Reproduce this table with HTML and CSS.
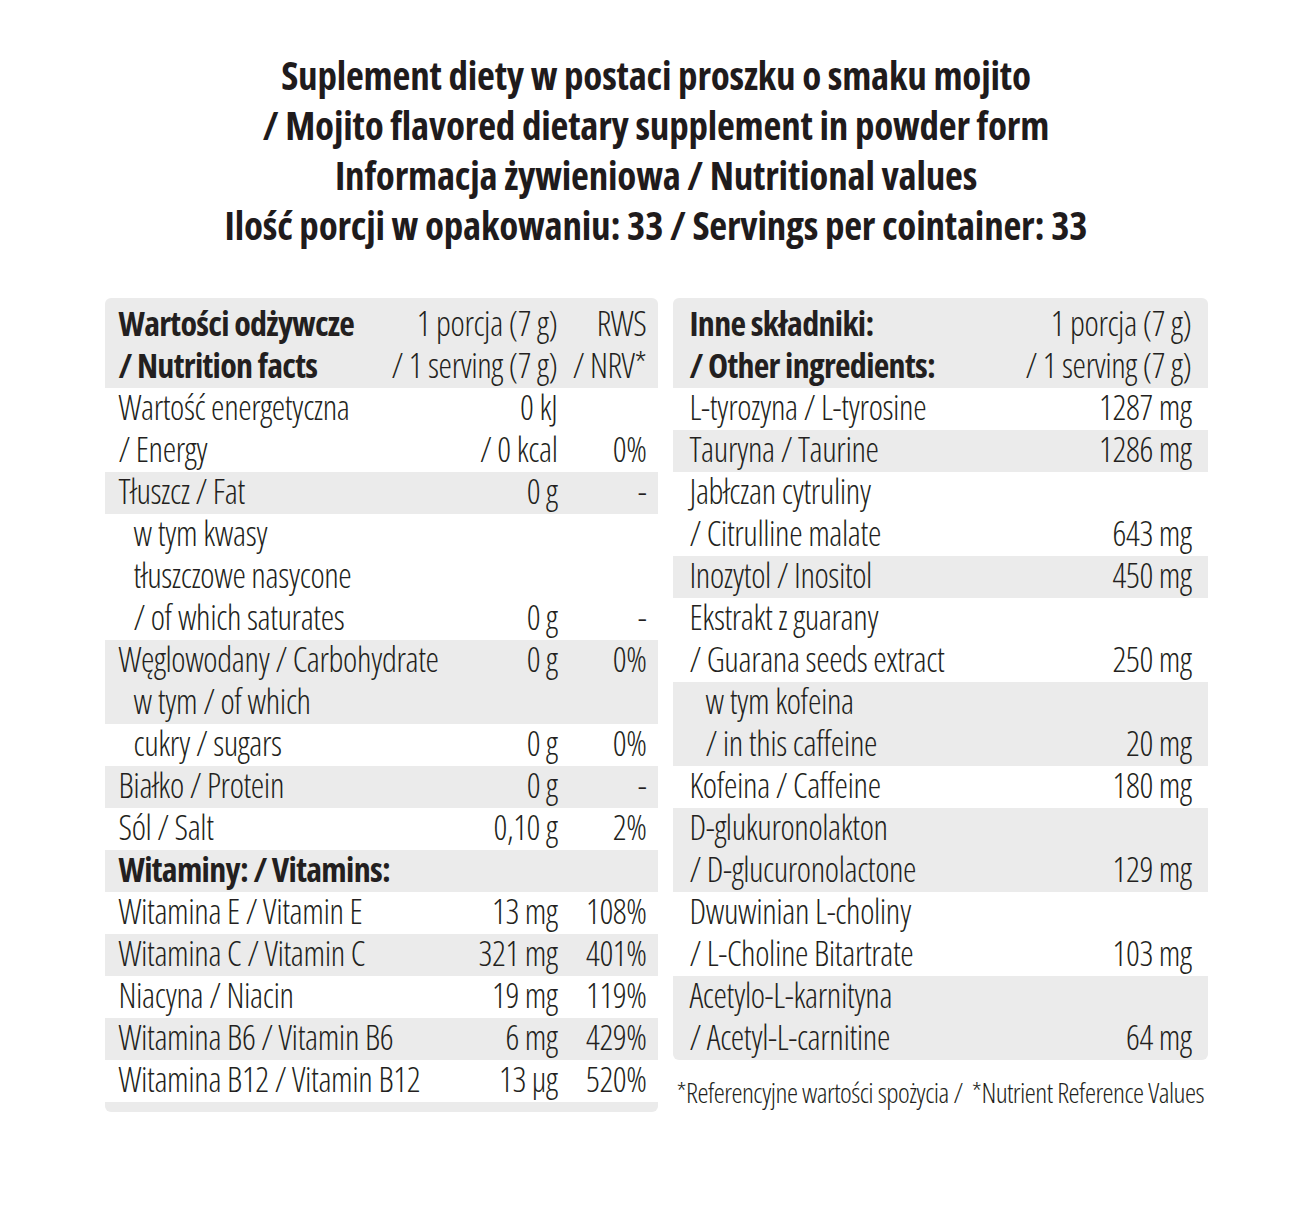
FILE: index.html
```
<!DOCTYPE html>
<html lang="pl">
<head>
<meta charset="utf-8">
<title>Informacja żywieniowa</title>
<link rel="stylesheet" href="styles.css">
</head>
<body>
<div class="page">
  <h1 class="title">
    <span>Suplement diety w postaci proszku o smaku mojito</span>
    <span>/ Mojito flavored dietary supplement in powder form</span>
    <span>Informacja żywieniowa / Nutritional values</span>
    <span>Ilość porcji w opakowaniu: 33 / Servings per cointainer: 33</span>
  </h1>

  <div class="tables">
    <div class="tbl left">
      <div class="grp shade head">
        <div class="ln"><span class="b">Wartości odżywcze</span><span class="v">1 porcja (7 g)</span><span class="v">RWS</span></div>
        <div class="ln"><span class="b">/ Nutrition facts</span><span class="v">/ 1 serving (7 g)</span><span class="v">/ NRV*</span></div>
      </div>
      <div class="grp">
        <div class="ln"><span>Wartość energetyczna</span><span class="v">0 kJ</span><span class="v"></span></div>
        <div class="ln"><span>/ Energy</span><span class="v">/ 0 kcal</span><span class="v">0%</span></div>
      </div>
      <div class="grp shade">
        <div class="ln"><span>Tłuszcz / Fat</span><span class="v">0 g</span><span class="v">-</span></div>
      </div>
      <div class="grp">
        <div class="ln"><span class="in">w tym kwasy</span><span class="v"></span><span class="v"></span></div>
        <div class="ln"><span class="in">tłuszczowe nasycone</span><span class="v"></span><span class="v"></span></div>
        <div class="ln"><span class="in">/ of which saturates</span><span class="v">0 g</span><span class="v">-</span></div>
      </div>
      <div class="grp shade">
        <div class="ln"><span>Węglowodany / Carbohydrate</span><span class="v">0 g</span><span class="v">0%</span></div>
        <div class="ln"><span class="in">w tym / of which</span><span class="v"></span><span class="v"></span></div>
      </div>
      <div class="grp">
        <div class="ln"><span class="in">cukry / sugars</span><span class="v">0 g</span><span class="v">0%</span></div>
      </div>
      <div class="grp shade">
        <div class="ln"><span>Białko / Protein</span><span class="v">0 g</span><span class="v">-</span></div>
      </div>
      <div class="grp">
        <div class="ln"><span>Sól / Salt</span><span class="v">0,10 g</span><span class="v">2%</span></div>
      </div>
      <div class="grp shade">
        <div class="ln"><span class="b">Witaminy: / Vitamins:</span><span class="v"></span><span class="v"></span></div>
      </div>
      <div class="grp">
        <div class="ln"><span>Witamina E / Vitamin E</span><span class="v">13 mg</span><span class="v">108%</span></div>
      </div>
      <div class="grp shade">
        <div class="ln"><span>Witamina C / Vitamin C</span><span class="v">321 mg</span><span class="v">401%</span></div>
      </div>
      <div class="grp">
        <div class="ln"><span>Niacyna / Niacin</span><span class="v">19 mg</span><span class="v">119%</span></div>
      </div>
      <div class="grp shade">
        <div class="ln"><span>Witamina B6 / Vitamin B6</span><span class="v">6 mg</span><span class="v">429%</span></div>
      </div>
      <div class="grp">
        <div class="ln"><span>Witamina B12 / Vitamin B12</span><span class="v">13 µg</span><span class="v">520%</span></div>
      </div>
      <div class="grp shade foot"></div>
    </div>

    <div class="side">
      <div class="tbl right">
        <div class="grp shade head">
          <div class="ln"><span class="b">Inne składniki:</span><span class="v">1 porcja (7 g)</span></div>
          <div class="ln"><span class="b">/ Other ingredients:</span><span class="v">/ 1 serving (7 g)</span></div>
        </div>
        <div class="grp">
          <div class="ln"><span>L-tyrozyna / L-tyrosine</span><span class="v">1287 mg</span></div>
        </div>
        <div class="grp shade">
          <div class="ln"><span>Tauryna / Taurine</span><span class="v">1286 mg</span></div>
        </div>
        <div class="grp">
          <div class="ln"><span>Jabłczan cytruliny</span><span class="v"></span></div>
          <div class="ln"><span>/ Citrulline malate</span><span class="v">643 mg</span></div>
        </div>
        <div class="grp shade">
          <div class="ln"><span>Inozytol / Inositol</span><span class="v">450 mg</span></div>
        </div>
        <div class="grp">
          <div class="ln"><span>Ekstrakt z guarany</span><span class="v"></span></div>
          <div class="ln"><span>/ Guarana seeds extract</span><span class="v">250 mg</span></div>
        </div>
        <div class="grp shade">
          <div class="ln"><span class="in">w tym kofeina</span><span class="v"></span></div>
          <div class="ln"><span class="in">/ in this caffeine</span><span class="v">20 mg</span></div>
        </div>
        <div class="grp">
          <div class="ln"><span>Kofeina / Caffeine</span><span class="v">180 mg</span></div>
        </div>
        <div class="grp shade">
          <div class="ln"><span>D-glukuronolakton</span><span class="v"></span></div>
          <div class="ln"><span>/ D-glucuronolactone</span><span class="v">129 mg</span></div>
        </div>
        <div class="grp">
          <div class="ln"><span>Dwuwinian L-choliny</span><span class="v"></span></div>
          <div class="ln"><span>/ L-Choline Bitartrate</span><span class="v">103 mg</span></div>
        </div>
        <div class="grp shade last">
          <div class="ln"><span>Acetylo-L-karnityna</span><span class="v"></span></div>
          <div class="ln"><span>/ Acetyl-L-carnitine</span><span class="v">64 mg</span></div>
        </div>
      </div>
      <p class="note">*Referencyjne wartości spożycia /&nbsp; *Nutrient Reference Values</p>
    </div>
  </div>
</div>
</body>
</html>
```
FILE: styles.css
```
html, body {
  margin: 0;
  padding: 0;
  background: #ffffff;
}

body {
  font-family: "Open Sans", "Noto Sans", "DejaVu Sans Condensed", sans-serif;
  font-stretch: 75%;
  font-weight: 300;
  color: #231f20;
}

.page {
  width: 1103px;
  margin: 0 auto;
  padding-top: 50px;
}

.title {
  margin: 0;
  display: flex;
  flex-direction: column;
  align-items: center;
  font-size: 39px;
  line-height: 50px;
  font-weight: 700;
  letter-spacing: -0.2px;
  color: #1f1b1c;
}

.tables {
  margin-top: 48px;
  display: flex;
  gap: 15px;
  align-items: flex-start;
}

.tbl {
  display: flex;
  flex-direction: column;
}

.left {
  width: 553px;
}

.side {
  width: 535px;
  display: flex;
  flex-direction: column;
}

.grp.shade {
  background: #ebebeb;
}

.head {
  padding-top: 6px;
  border-radius: 6px 6px 0 0;
}

.foot {
  height: 10px;
  border-radius: 0 0 6px 6px;
}

.last {
  border-radius: 0 0 6px 6px;
}

.ln {
  display: grid;
  height: 42px;
  grid-template-rows: 42px;
  align-items: start;
  font-size: 34px;
  line-height: 38px;
  letter-spacing: -0.4px;
  white-space: nowrap;
}

.left .ln {
  grid-template-columns: 1fr auto 89px;
  padding: 0 11px 0 14px;
}

.right .ln {
  grid-template-columns: 1fr auto;
  padding: 0 16px 0 17px;
}

.v {
  text-align: right;
}

.b {
  font-weight: 700;
  letter-spacing: -0.7px;
}

.in {
  padding-left: 15px;
}

.right .in {
  padding-left: 16px;
}

.note {
  margin: 17px 0 0 4px;
  font-size: 28px;
  line-height: 30px;
  letter-spacing: -0.55px;
  white-space: nowrap;
}
```
